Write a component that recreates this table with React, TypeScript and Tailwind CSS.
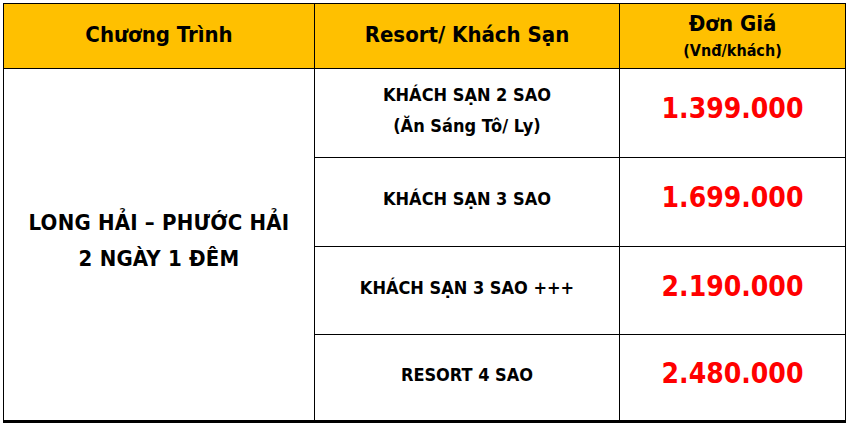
import React from "react";

const font = { fontFamily: '"DejaVu Sans Condensed", "DejaVu Sans", Verdana, sans-serif' };

export default function App() {
  const rows = [
    { name: ["KHÁCH SẠN 2 SAO", "(Ăn Sáng Tô/ Ly)"], price: "1.399.000", h: "h-[89px]" },
    { name: ["KHÁCH SẠN 3 SAO"], price: "1.699.000", h: "h-[89px]" },
    { name: ["KHÁCH SẠN 3 SAO +++"], price: "2.190.000", h: "h-[88px]" },
    { name: ["RESORT 4 SAO"], price: "2.480.000", h: "h-[88px]" },
  ];
  return (
    <div className="w-[848px] h-[428px] bg-white pt-[3px] pl-[3px] font-bold text-black" style={font}>
      <div className="w-[843px] border-l border-t border-black">
        <div className="flex h-[65px] bg-[#FFC000]">
          <div className="w-[311px] border-r border-b border-black flex items-center justify-center text-[22px] pb-[4px]">
            Chương Trình
          </div>
          <div className="w-[305px] border-r border-b border-black flex items-center justify-center text-[22px] pb-[4px]">
            Resort/ Khách Sạn
          </div>
          <div className="w-[226px] border-r border-b border-black flex flex-col items-center justify-center">
            <div className="text-[22px] leading-[28px] -mt-[2px]">Đơn Giá</div>
            <div className="text-[16px] leading-[20px] mt-[3px]">(Vnđ/khách)</div>
          </div>
        </div>
        <div className="flex">
          <div className="w-[311px] border-r border-b-[3px] border-black flex flex-col items-center justify-center text-[22px] leading-[36px] pb-[8px] tracking-[0.2px]">
            <div>LONG HẢI – PHƯỚC HẢI</div>
            <div>2 NGÀY 1 ĐÊM</div>
          </div>
          <div className="flex flex-col">
            {rows.map((r, i) => (
              <div key={i} className={`flex ${r.h}`}>
                <div
                  className={`w-[305px] border-r border-black flex flex-col items-center justify-center text-[18px] leading-[31px] pb-[7px] ${
                    i === 3 ? "border-b-[3px]" : "border-b"
                  }`}
                >
                  {r.name.map((n, j) => (
                    <div key={j}>{n}</div>
                  ))}
                </div>
                <div
                  className={`w-[226px] border-r border-black flex items-center justify-center text-[28px] text-[#FF0000] pb-[8px] ${
                    i === 3 ? "border-b-[3px]" : "border-b"
                  }`}
                >
                  {r.price}
                </div>
              </div>
            ))}
          </div>
        </div>
      </div>
    </div>
  );
}
